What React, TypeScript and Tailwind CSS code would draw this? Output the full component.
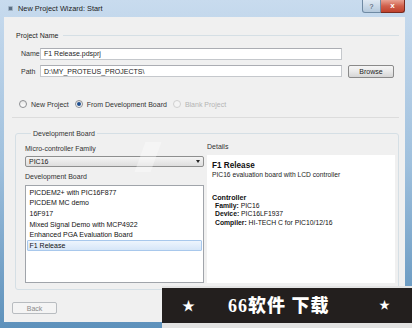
import React from "react";

const font = { fontFamily: '"Liberation Sans", Arial, "Noto Sans CJK SC", sans-serif' };

function Radio({ checked, disabled }: { checked?: boolean; disabled?: boolean }) {
  return (
    <span
      className={`flex items-center justify-center w-[8px] h-[8px] rounded-full border ${
        disabled ? "border-[#d0d0d0] bg-[#f4f4f4]" : "border-[#8d8f92] bg-gradient-to-b from-[#e6e6e6] to-[#ffffff]"
      }`}
    >
      {checked && <span className="w-[4px] h-[4px] rounded-full bg-[#1f4f8f]" />}
    </span>
  );
}

export default function App() {
  const items = [
    "PICDEM2+ with PIC16F877",
    "PICDEM MC demo",
    "16F917",
    "Mixed Signal Demo with MCP4922",
    "Enhanced PGA Evaluation Board",
    "F1 Release",
  ];
  return (
    <div
      className="relative w-[412px] h-[328px] overflow-hidden flex flex-col bg-gradient-to-b from-[#c8dbee] via-[#9fc0dd] to-[#5d91bb] text-[#1e1e1e]"
      style={font}
    >
      {/* Title bar */}
      <div className="h-[17px] flex items-start shrink-0">
        <div className="flex items-center h-[17px] pl-[8px]">
          <span className="w-[5px] h-[5px] rounded-[1px] bg-[#5a6f86] border border-[#9fb1c2]" />
          <span className="ml-[5px] text-[7.4px] leading-[9px] text-[#1b1b1b]">New Project Wizard: Start</span>
        </div>
        <div className="ml-auto mr-[7px] flex">
          <div className="w-[19px] h-[13px] flex items-center justify-center border border-[#6f8aa3] border-t-0 rounded-bl-[3px] bg-gradient-to-b from-[#dfe9f3] to-[#b5c9dc] text-[7px] leading-none text-[#3b4a5a]">
            ?
          </div>
          <div className="w-[24px] h-[13px] flex items-center justify-center border border-[#7a2a1e] border-t-0 border-l-0 rounded-br-[3px] bg-gradient-to-b from-[#e8a293] via-[#d0604c] to-[#c0412c] text-[8px] leading-none text-white font-bold">
            x
          </div>
        </div>
      </div>

      {/* Client area */}
      <div className="ml-[4px] mr-[7px] h-[305px] bg-[#f0f0f0] flex flex-col shrink-0 text-[7px]">
        {/* Project Name header */}
        <div className="mt-[14px] h-[9px] flex items-center pl-[12px] pr-[6px]">
          <span className="leading-[9px] text-[#1e1e1e]">Project Name</span>
          <div className="flex-1 ml-[5px] border-t border-[#d5dfe5]" />
        </div>
        {/* Name row */}
        <div className="mt-[7.5px] h-[12px] flex items-center pl-[17px]">
          <span className="w-[19px] leading-[9px] text-[#333]">Name</span>
          <div className="w-[302px] h-[12px] bg-white border border-[#c5c8cc] border-t-[#abadb3] flex items-center pl-[3px] leading-[9px]">
            F1 Release.pdsprj
          </div>
        </div>
        {/* Path row */}
        <div className="mt-[5px] h-[13px] flex items-center pl-[17px]">
          <span className="w-[19px] leading-[9px] text-[#333]">Path</span>
          <div className="w-[302px] h-[12px] bg-white border border-[#c5c8cc] border-t-[#abadb3] flex items-center pl-[3px] leading-[9px]">
            D:\MY_PROTEUS_PROJECTS\
          </div>
          <div className="ml-[6px] w-[46px] h-[13px] rounded-[2px] border border-[#8a8a8a] bg-gradient-to-b from-[#f6f6f6] via-[#e9e9e9] to-[#d6d6d6] flex items-center justify-center leading-[9px] text-[#222]">
            Browse
          </div>
        </div>
        {/* Radio row */}
        <div className="mt-[21.5px] h-[10px] flex items-center pl-[15px]">
          <div className="flex items-center">
            <Radio />
            <span className="ml-[4px] leading-[9px] text-[#333]">New Project</span>
          </div>
          <div className="flex items-center ml-[6px]">
            <Radio checked />
            <span className="ml-[4px] leading-[9px] text-[#333]">From Development Board</span>
          </div>
          <div className="flex items-center ml-[6px]">
            <Radio disabled />
            <span className="ml-[4px] leading-[9px] text-[#b4b4b4]">Blank Project</span>
          </div>
        </div>
        {/* separator */}
        <div className="mt-[8px] ml-[8px] mr-[6px] border-t border-[#dcdcdc]" />

        {/* Development Board group */}
        <fieldset className="mt-[10.5px] ml-[11px] mr-[6px] border border-[#d5dfe5] rounded-[3px] pl-[9px] pr-[3px] pb-[6px]">
          <legend className="ml-[6px] px-[2px] leading-[9px] text-[#333]">Development Board</legend>
          <div className="flex">
            <div className="w-[179px] flex flex-col pt-[6px]">
              <span className="leading-[9px] text-[#333]">Micro-controller Family</span>
              <div className="mt-[3.5px] h-[11px] border border-[#8e8f8f] rounded-[2px] bg-gradient-to-b from-[#f4f4f4] to-[#dedede] flex items-center pl-[3px] pr-[3px]">
                <span className="leading-[9px] text-[#222]">PIC16</span>
                <span className="ml-auto w-0 h-0 border-l-[2.5px] border-r-[2.5px] border-t-[3px] border-l-transparent border-r-transparent border-t-[#222]" />
              </div>
              <span className="mt-[5px] leading-[9px] text-[#333]">Development Board</span>
              <div className="mt-[3.5px] h-[98px] bg-white border border-[#a0a4aa] pt-[1.5px] px-[1px]">
                {items.map((it, i) =>
                  i === 5 ? (
                    <div
                      key={it}
                      className="h-[10.6px] flex items-center pl-[1.5px] rounded-[1px] border border-[#a8c8ec] bg-gradient-to-b from-[#eef5fd] to-[#d6e6f8] leading-[9px] text-[#111]"
                    >
                      {it}
                    </div>
                  ) : (
                    <div key={it} className="h-[10.6px] flex items-center pl-[2.5px] leading-[9px] text-[#111]">
                      {it}
                    </div>
                  )
                )}
              </div>
            </div>
            <div className="ml-[3px] flex-1 flex flex-col pt-[4px]">
              <span className="leading-[9px] text-[#333]">Details</span>
              <div className="mt-[4.5px] h-[128px] bg-white pl-[5px] pt-[5.5px] flex flex-col">
                <span className="text-[8.2px] font-bold leading-[9px] text-[#111]">F1 Release</span>
                <span className="text-[6.7px] leading-[9px] text-[#222]">PIC16 evaluation board with LCD controller</span>
                <span className="mt-[15px] text-[7.2px] font-bold leading-[8.4px] text-[#111]">Controller</span>
                <div className="pl-[3px] text-[6.8px] leading-[8.4px] text-[#111]">
                  <div>
                    <span className="font-bold">Family:</span> PIC16
                  </div>
                  <div>
                    <span className="font-bold">Device:</span> PIC16LF1937
                  </div>
                  <div>
                    <span className="font-bold">Compiler:</span> HI-TECH C for PIC10/12/16
                  </div>
                </div>
              </div>
            </div>
          </div>
        </fieldset>

        {/* Back button */}
        <div className="mt-[12px] ml-[8px] w-[45px] h-[12px] rounded-[2px] border border-[#b8bcc0] bg-[#f4f4f4] flex items-center justify-center leading-[9px] text-[#8a8a8a]">
          Back
        </div>
      </div>

      {/* faint site watermark (shape only) */}
      <div className="absolute left-[140px] top-[142px] flex items-center opacity-50 pointer-events-none">
        <div className="w-[16px] h-[30px] bg-white/70 skew-x-[-20deg]" />
      </div>

      {/* bottom banner watermark */}
      <div className="absolute left-[162px] top-[286px] right-0 bottom-0 flex flex-col pointer-events-none">
        <div className="h-[2px] bg-[#e4e4e4]" />
        <div className="h-[35px] bg-[#231f1e] flex items-center">
          <span className="ml-[20px] text-white text-[13px] leading-none">★</span>
          <span
            className="ml-[33px] text-white text-[18px] font-black leading-none tracking-[1px]"
            style={{ fontFamily: '"Liberation Serif", "Noto Sans CJK SC", serif' }}
          >
            66软件 下载
          </span>
          <span className="ml-auto mr-[22px] text-white text-[11px] leading-none">★</span>
        </div>
        <div className="flex-1 bg-[#e2e2e2]" />
      </div>
    </div>
  );
}
